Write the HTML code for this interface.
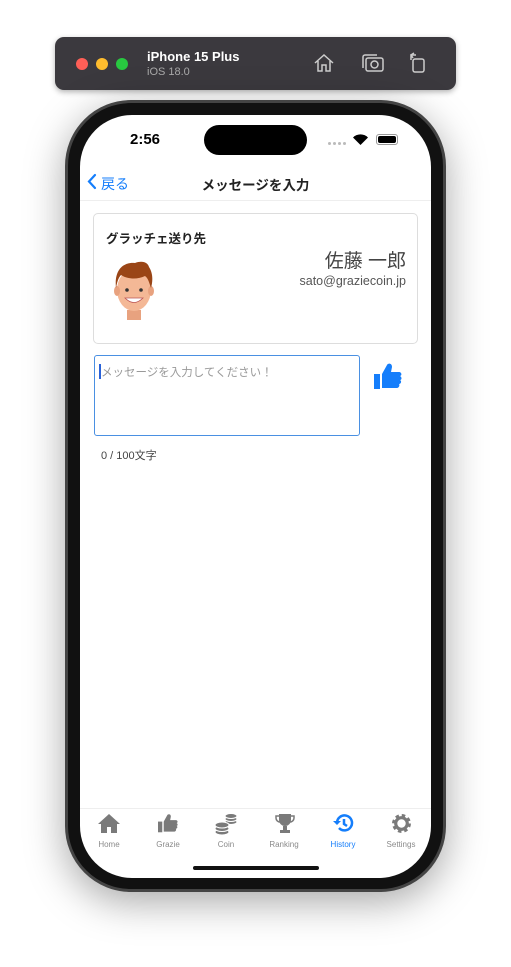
<!DOCTYPE html><html><head><meta charset="utf-8"><style>
*{margin:0;padding:0;box-sizing:border-box}
body{width:511px;height:967px;background:#fff;position:relative;overflow:hidden;font-family:"Liberation Sans","Noto Sans CJK JP",sans-serif}
.tb{position:absolute;left:55px;top:37px;width:401px;height:53px;background:#3b393e;border-radius:9px;box-shadow:0 2px 6px rgba(0,0,0,.3)}
.dot{position:absolute;top:21px;width:12px;height:12px;border-radius:50%}
.phone{position:absolute;left:65px;top:100px;width:381px;height:792px;border-radius:66px;background:#111;border:3px solid #444;box-shadow:0 10px 40px rgba(0,0,0,.35)}
.screen{position:absolute;left:80px;top:115px;width:351px;height:763px;border-radius:52px;background:#fff;overflow:hidden}
.t{position:absolute;white-space:nowrap}
.tab{position:absolute;top:840px;width:58px;text-align:center;font-size:8px;color:#8a8a8a}
.sd{position:absolute;top:27px;width:3px;height:3px;border-radius:50%;background:#bbb}
</style></head><body>
<div class="tb">
<div class="dot" style="left:21px;background:#fe5f57"></div>
<div class="dot" style="left:41px;background:#febc2e"></div>
<div class="dot" style="left:61px;background:#28c840"></div>
<div class="t" style="left:92px;top:12px;color:#fff;font-weight:bold;font-size:13px">iPhone 15 Plus</div>
<div class="t" style="left:92px;top:29px;color:#aaa;font-size:11px">iOS 18.0</div>
<svg style="position:absolute;left:258px;top:15px" width="22" height="22" viewBox="0 0 22 22" fill="none" stroke="#ccc" stroke-width="1.5"><path d="M2 11L11 3l9 8M5 9v10h4v-6h4v6h4V9"/></svg>
<svg style="position:absolute;left:306px;top:15px" width="24" height="22" viewBox="0 0 24 22" fill="none" stroke="#ccc" stroke-width="1.5"><rect x="5" y="6" width="17" height="13" rx="2"/><path d="M2 16V5a2 2 0 0 1 2-2h12"/><circle cx="13.5" cy="12.5" r="3.5"/></svg>
<svg style="position:absolute;left:352px;top:14px" width="22" height="24" viewBox="0 0 22 24" fill="none" stroke="#ccc" stroke-width="1.5"><rect x="6" y="8" width="11" height="13" rx="2"/><path d="M4 9V4h5M7 2L4 4l2 3"/></svg>
</div>
<div class="phone"></div>
<div class="screen">
<div class="t" style="left:50px;top:16px;font-size:15px;font-weight:bold">2:56</div>
<div style="position:absolute;left:124px;top:10px;width:103px;height:30px;border-radius:15px;background:#000"></div>
<div class="sd" style="left:248px"></div><div class="sd" style="left:253px"></div><div class="sd" style="left:258px"></div><div class="sd" style="left:263px"></div>
<svg style="position:absolute;left:273px;top:19px" width="15" height="11" viewBox="0 0 15 11"><path d="M7.5 11L0 3.5a10.5 10.5 0 0 1 15 0z" fill="#000"/></svg>
<div style="position:absolute;left:296px;top:19px;width:22px;height:11px;border:1px solid #999;border-radius:3px;padding:1px"><div style="width:100%;height:100%;background:#000;border-radius:2px"></div></div>
<svg style="position:absolute;left:7px;top:58px" width="10" height="17" viewBox="0 0 10 17"><path d="M8 2L2 8.5 8 15" fill="none" stroke="#157efb" stroke-width="2.2" stroke-linecap="round"/></svg>
<div class="t" style="left:21px;top:59px;font-size:14px;color:#157efb">戻る</div>
<div class="t" style="left:0;width:351px;text-align:center;top:59px;font-size:13.5px;font-weight:bold;color:#222">メッセージを入力</div>
<div style="position:absolute;left:0;top:85px;width:351px;height:1px;background:#eee"></div>
<div style="position:absolute;left:13px;top:98px;width:325px;height:131px;border:1px solid #ddd;border-radius:5px"></div>
<div class="t" style="left:26px;top:113px;font-size:12.5px;font-weight:bold;color:#222">グラッチェ送り先</div>
<svg style="position:absolute;left:33px;top:145px" width="44" height="60" viewBox="0 0 44 60">
<path d="M14 50h14v10H14z" fill="#e8a27f"/>
<ellipse cx="21" cy="30" rx="17" ry="21" fill="#f4b896"/>
<ellipse cx="4" cy="31" rx="3" ry="5" fill="#e8a27f"/><ellipse cx="38" cy="31" rx="3" ry="5" fill="#e8a27f"/>
<path d="M3 28C1 10 10 2 22 3c8-3 13 0 14 4 4 6 4 14 2 21-2-6-3-10-6-12-8 4-18 3-24-1-3 3-4 8-5 13z" fill="#9a4516"/>
<circle cx="14" cy="30" r="1.8" fill="#333"/><circle cx="28" cy="30" r="1.8" fill="#333"/>
<path d="M12 38q9 9 18 0z" fill="#fff" stroke="#b55" stroke-width=".8"/>
</svg>
<div class="t" style="right:25px;top:131px;font-size:19px;color:#444">佐藤 一郎</div>
<div class="t" style="right:25px;top:159px;font-size:12.5px;color:#555">sato@graziecoin.jp</div>
<div style="position:absolute;left:14px;top:240px;width:266px;height:81px;border:1px solid #4a90e2;border-radius:3px"></div>
<div style="position:absolute;left:19px;top:249px;width:1.5px;height:15px;background:#2a62d8"></div>
<div class="t" style="left:21px;top:249px;font-size:11.5px;color:#999">メッセージを入力してください！</div>
<svg style="position:absolute;left:293px;top:247px" width="30" height="28" viewBox="0 0 30 28"><path d="M1 12h6v15H1z" fill="#157efb"/><path d="M9 12L14 3C15 1 19 1 19 5L18 10H26C29 10 29 14 27 14C29 15 29 18 27 18C29 19 28 22 26 22C27 23 26 26 24 26H9Z" fill="#157efb"/></svg>
<div class="t" style="left:21px;top:332px;font-size:11px;color:#444">0 / 100文字</div>
<div style="position:absolute;left:0;top:693px;width:351px;height:1px;background:#eee"></div>
</div>
<svg style="position:absolute;left:98px;top:813px" width="22" height="20" viewBox="0 0 22 20"><path d="M11 1L0 11h3v9h6v-6h4v6h6v-9h3z" fill="#7a7a7a"/></svg>
<svg style="position:absolute;left:157px;top:813px" width="22" height="20" viewBox="0 0 30 28"><path d="M1 12h6v15H1z" fill="#7a7a7a"/><path d="M9 12L14 3C15 1 19 1 19 5L18 10H26C29 10 29 14 27 14C29 15 29 18 27 18C29 19 28 22 26 22C27 23 26 26 24 26H9Z" fill="#7a7a7a"/></svg>
<svg style="position:absolute;left:214px;top:812px" width="24" height="24" viewBox="0 0 24 24"><g fill="#7a7a7a" stroke="#fff" stroke-width="1"><ellipse cx="17" cy="10" rx="6" ry="2.5"/><ellipse cx="17" cy="7" rx="6" ry="2.5"/><ellipse cx="17" cy="4" rx="6" ry="2.5"/><ellipse cx="8" cy="20" rx="7" ry="3"/><ellipse cx="8" cy="16.5" rx="7" ry="3"/><ellipse cx="8" cy="13" rx="7" ry="3"/></g></svg>
<svg style="position:absolute;left:275px;top:813px" width="20" height="21" viewBox="0 0 20 21" fill="#7a7a7a"><path d="M4 1h12v6a6 6 0 0 1-12 0zM8 13h4v4h3v3H5v-3h3z"/><path d="M4 3H1v2a4 4 0 0 0 4 4M16 3h3v2a4 4 0 0 1-4 4" fill="none" stroke="#7a7a7a" stroke-width="1.5"/></svg>
<svg style="position:absolute;left:332px;top:813px" width="22" height="20" viewBox="0 0 22 20" fill="none" stroke="#157efb" stroke-width="2.5"><path d="M5 10a7.5 7.5 0 1 1 2 5"/><path d="M12 6v5l3 2"/><path d="M1 8l4 4 4-4" fill="#157efb" stroke="none"/></svg>
<svg style="position:absolute;left:391px;top:813px" width="21" height="21" viewBox="0 0 20 20"><circle cx="10" cy="10" r="7" fill="none" stroke="#7a7a7a" stroke-width="4" stroke-dasharray="3 2.5"/><circle cx="10" cy="10" r="5.5" fill="none" stroke="#7a7a7a" stroke-width="3"/></svg>
<div class="tab" style="left:80px">Home</div>
<div class="tab" style="left:139px">Grazie</div>
<div class="tab" style="left:197px">Coin</div>
<div class="tab" style="left:255px">Ranking</div>
<div class="tab" style="left:314px;color:#157efb">History</div>
<div class="tab" style="left:372px">Settings</div>
<div style="position:absolute;left:193px;top:866px;width:126px;height:4px;border-radius:2px;background:#111"></div>
</body></html>
